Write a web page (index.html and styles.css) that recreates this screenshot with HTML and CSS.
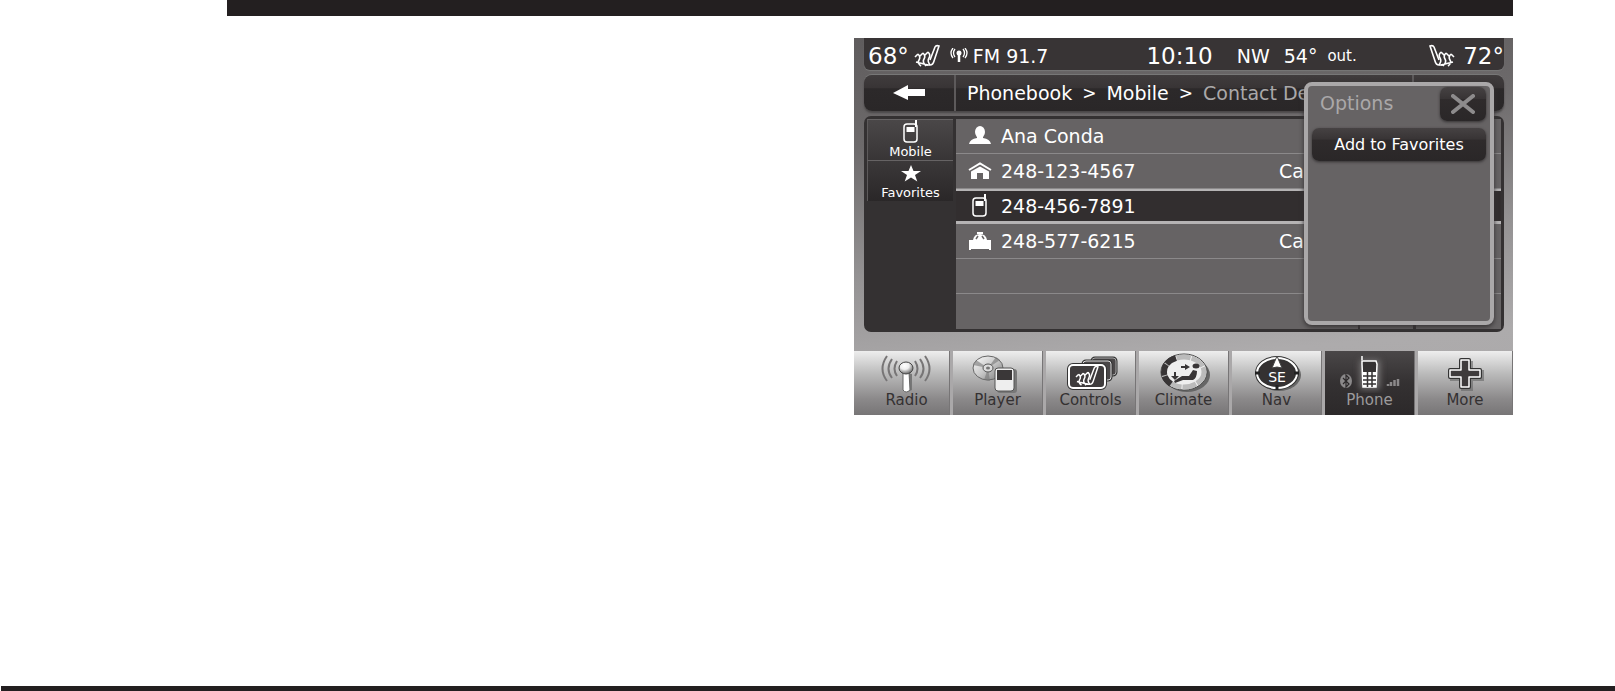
FILE: index.html
```
<!DOCTYPE html>
<html lang="en">
<head>
  <meta charset="UTF-8">
  <meta name="viewport" content="width=device-width, initial-scale=1.0">
  <title>Contact Details</title>
  <link rel="stylesheet" href="styles.css">
</head>
<body>
  <!-- shared icons -->
  <svg class="defs" aria-hidden="true">
    <defs>
      <symbol id="mobile" viewBox="0 0 18 24">
        <rect x="2" y="4" width="13" height="18" rx="3" fill="none" stroke="#fff" stroke-width="1.5"/>
        <path d="M14 0v7" stroke="#fff" stroke-width="2"/>
        <path d="M4.500 7h8v5h-8z" fill="#fff"/>
      </symbol>
      <symbol id="seat" viewBox="0 0 26 24">
        <path d="M16 16l5-13q1-2 4-1l-5 15q-1 4-4 4h-4" fill="none" stroke-width="1.600"/>
        <path d="M4 10q3 3 1 6t2 6M9 9q3 3 1 6t2 7M14 8q3 3 1 6t1 7M1 13l3-3M6 12l3-3M11 11l3-3M2 18l12 3" fill="none" stroke-width="1.600"/>
      </symbol>
      <linearGradient id="metal" x1="0" y1="0" x2="1" y2="1">
        <stop offset="0" stop-color="#fff"/>
        <stop offset=".5" stop-color="#c8c8c8"/>
        <stop offset="1" stop-color="#777"/>
      </linearGradient>
      <radialGradient id="ball" cx=".4" cy=".3" r=".8">
        <stop offset="0" stop-color="#fff"/>
        <stop offset=".4" stop-color="#eee"/>
        <stop offset="1" stop-color="#444"/>
      </radialGradient>
    </defs>
  </svg>

  <div class="topbar"></div>

  <main>
    <div class="screen">
      <header class="status">
        <span class="temp">68°</span>
        <svg class="seat" width="26" height="24"><use href="#seat"/></svg>
        <svg class="antenna" width="18" height="16" viewBox="0 0 18 16">
          <circle cx="9" cy="5" r="2.500" fill="#fff"/>
          <path d="M9 5v9" stroke="#fff" stroke-width="2.500"/>
          <path d="M5 1q-3 4 0 8M13 1q3 4 0 8M3 0q-4 5 0 10M15 0q4 5 0 10" fill="none" stroke="#fff" stroke-width="1.300"/>
        </svg>
        <span class="station">FM 91.7</span>
        <span class="clock">10:10</span>
        <span class="compass">NW</span>
        <span class="outside">54°</span>
        <span class="out">out.</span>
        <svg class="seat right" width="26" height="24"><use href="#seat" transform="translate(26 0) scale(-1 1)"/></svg>
        <span class="temp">72°</span>
      </header>

      <div class="crumbs">
        <button class="back" aria-label="Back">
          <svg width="32" height="16" viewBox="0 0 32 16"><path d="M0 8L15 0v4h17v7H15v4z" fill="#fff"/></svg>
        </button>
        <nav class="path">
          <a href="#">Phonebook</a><span>&gt;</span><a href="#">Mobile</a><span>&gt;</span><a href="#" class="current">Contact De</a>
        </nav>
        <div class="corner"></div>
      </div>

      <section class="book">
        <div class="side">
          <button>
            <svg width="18" height="24"><use href="#mobile"/></svg>
            <span>Mobile</span>
          </button>
          <button class="dark">
            <svg width="20" height="24" viewBox="0 0 20 24"><path d="M10 4l2.500 6H20l-6 4 2.300 6.500L10 16.500 3.700 20.500 6 14 0 10h7.500z" fill="#fff"/></svg>
            <span>Favorites</span>
          </button>
        </div>
        <ul class="contacts">
          <li>
            <svg width="24" height="24" viewBox="0 0 24 24"><ellipse cx="12" cy="8" rx="5" ry="6" fill="#fff"/><path d="M9 12h6v2q7 1 8 6H1q1-5 8-6z" fill="#fff"/></svg>
            <span>Ana Conda</span>
          </li>
          <li>
            <svg width="24" height="24" viewBox="0 0 24 24"><path d="M1 11L12 4.500 23 11" fill="none" stroke="#fff" stroke-width="2"/><path d="M3 12.500L12 7.500l9 5V20h-6v-6H9v6H3z" fill="#fff"/></svg>
            <span>248-123-4567</span>
            <button class="call">Ca</button>
          </li>
          <li class="selected">
            <svg width="24" height="24" viewBox="0 0 24 24"><use href="#mobile" x="3" width="18" height="24"/></svg>
            <span>248-456-7891</span>
          </li>
          <li>
            <svg width="24" height="24" viewBox="0 0 24 24"><path d="M1 11h22v10h-2v-1H3v1H1zM9 3h6v2H9z" fill="#fff"/><path d="M5 11q1-6 7-6t7 6z" fill="#fff"/><path d="M8 10l2-3M16 10l-2-3" stroke="#666364" stroke-width="1.500"/></svg>
            <span>248-577-6215</span>
            <button class="call">Ca</button>
          </li>
          <li></li>
          <li></li>
        </ul>
        <div class="ticks"></div>
      </section>

      <nav class="tabs">
        <button>
          <svg width="56" height="40" viewBox="0 0 56 40">
            <path d="M18 8q-5 8 0 15M13 6q-7 10 0 19M8 3q-9 13 0 25M36 8q5 8 0 15M41 6q7 10 0 19M46 3q9 13 0 25" fill="none" stroke="#777576" stroke-width="2"/>
            <path d="M29 20l4 1v16l-4 2z" fill="#777"/>
            <path d="M24 19h6l1 18q-4 4-7 0z" fill="#fff" stroke="#666"/>
            <ellipse cx="27" cy="15" rx="7" ry="6" fill="url(#ball)" stroke="#444"/>
          </svg>
          <span>Radio</span>
        </button>
        <button>
          <svg width="56" height="40" viewBox="0 0 56 40">
            <ellipse cx="18" cy="15" rx="15" ry="12" fill="url(#metal)" stroke="#666"/>
            <path d="M18 15L6 7l-3 5zM18 15l8-11 4 3zM18 15l-4 12 6 1z" fill="#777" opacity=".6"/>
            <ellipse cx="18" cy="15" rx="5" ry="4" fill="#ddd" stroke="#555"/>
            <ellipse cx="18" cy="15" rx="2" ry="1.500" fill="#777"/>
            <rect x="27" y="16" width="20" height="24" rx="3" fill="#777"/>
            <rect x="25" y="15" width="19" height="23" rx="3" fill="#eee" stroke="#555"/>
            <path d="M27 17h15v10H27z" fill="#3a3738"/>
          </svg>
          <span>Player</span>
        </button>
        <button>
          <svg width="56" height="40" viewBox="0 0 56 40">
            <rect x="29" y="5" width="24" height="17" rx="3" fill="#4a4748" stroke="#333" stroke-width="3"/>
            <rect x="29" y="5" width="24" height="17" rx="3" fill="#4a4748" stroke="#aaa"/>
            <rect x="20" y="8" width="28" height="19" rx="3" fill="#4a4748" stroke="#333" stroke-width="3"/>
            <rect x="20" y="8" width="28" height="19" rx="3" fill="#4a4748" stroke="#ddd"/>
            <rect x="6" y="12" width="36" height="23" rx="4" fill="#3e3b3c" stroke="#333" stroke-width="4"/>
            <rect x="6" y="12" width="36" height="23" rx="4" fill="#3e3b3c" stroke="#fff" stroke-width="2"/>
            <use href="#seat" class="seat" x="11" y="12" width="26" height="22"/>
          </svg>
          <span>Controls</span>
        </button>
        <button>
          <svg width="56" height="40" viewBox="0 0 56 40">
            <ellipse cx="31" cy="22" rx="23" ry="17" fill="#666"/>
            <ellipse cx="28" cy="19" rx="23" ry="18" fill="#eee" stroke="#444"/>
            <ellipse cx="28" cy="19" rx="20" ry="15" fill="none" stroke="#bbb" stroke-width="5" stroke-dasharray="14 1"/>
            <path d="M20 5q-12 4-12 14 0 7 7 12" fill="none" stroke="#383536" stroke-width="6" stroke-dasharray="11 1"/>
            <ellipse cx="40" cy="13" rx="3.500" ry="2.500" fill="#383536"/>
            <path d="M41 18q0 7-4 9H27l-8 3-1-2 8-5h7l4-6z" fill="#383536"/>
            <path d="M25 13h4v-2l5 3-5 3v-2h-4zM18 19h2v4h3l-4 4-4-4h3z" fill="#383536"/>
          </svg>
          <span>Climate</span>
        </button>
        <button>
          <svg width="56" height="40" viewBox="0 0 56 40">
            <ellipse cx="30" cy="22" rx="22" ry="16" fill="#666"/>
            <ellipse cx="28" cy="20" rx="20" ry="15" fill="#343132" stroke="#333" stroke-width="4"/>
            <ellipse cx="28" cy="20" rx="20" ry="15" fill="none" stroke="#fff" stroke-width="2"/>
            <path d="M6 20h5M45 20h5M28 32v5" stroke="#222" stroke-width="3"/>
            <path d="M28 3l-5 12q5-2 10 0z" fill="#fff" stroke="#444"/>
            <text x="28" y="29" text-anchor="middle">SE</text>
          </svg>
          <span>Nav</span>
        </button>
        <button class="active">
          <svg width="64" height="40" viewBox="0 0 64 40">
            <rect x="22" y="7" width="20" height="29" fill="#787576" class="glow"/>
            <ellipse cx="8" cy="28" rx="6" ry="7" fill="#8b898a"/>
            <path d="M5 25l6 6-3 3V22l3 3-6 6" fill="none" stroke="#2c292a" stroke-width="1.200"/>
            <path d="M24 3v4M24 8h14l1 3-1 23H25l-1-23z" fill="#353233" stroke="#fff" stroke-width="1.500"/>
            <path d="M25 19h13v15H25z" fill="#fff"/>
            <path d="M25 23h13M25 27h13M25 31h13M29.500 19v15M34 19v15" stroke="#353233" stroke-width="1.500"/>
            <path d="M50 33v-2M53 33v-4M56.500 33v-6M60 33v-7" stroke="#8b898a" stroke-width="2.500"/>
          </svg>
          <span>Phone</span>
        </button>
        <button>
          <svg width="56" height="40" viewBox="0 0 56 40">
            <path d="M26 10h8v9h11v7H34v10h-8V26H15v-7h11z" fill="#666" stroke="#666" stroke-width="4" opacity=".6"/>
            <path d="M24 7h8v10h11v7H32v10h-8V24H13v-7h11z" fill="#3e3b3c" stroke="#333" stroke-width="4" stroke-linejoin="round"/>
            <path d="M24 7h8v10h11v7H32v10h-8V24H13v-7h11z" fill="#3e3b3c" stroke="#fff" stroke-width="1.500" stroke-linejoin="round"/>
          </svg>
          <span>More</span>
        </button>
      </nav>

      <aside class="options">
        <div class="options-head">
          <h2>Options</h2>
          <button class="close" aria-label="Close">
            <svg width="24" height="20" viewBox="0 0 24 20"><path d="M2 2l20 16M22 2L2 18" stroke="#8d8b8c" stroke-width="4" stroke-linecap="round"/></svg>
          </button>
        </div>
        <button class="add">Add to Favorites</button>
      </aside>
    </div>
  </main>

  <footer></footer>
</body>
</html>
```

FILE: styles.css
```
* {
  margin: 0;
  padding: 0;
  box-sizing: border-box;
}

body {
  min-height: 100vh;
  display: flex;
  flex-direction: column;
  background: #fff;
  font-family: "DejaVu Sans", sans-serif;
  font-size: 19px;
  color: #fff;
}

button {
  border: 0;
  background: none;
  font: inherit;
  color: inherit;
  cursor: pointer;
}

a {
  color: inherit;
  text-decoration: none;
}

svg {
  display: block;
  flex: none;
}

.defs {
  position: absolute;
  width: 0;
  height: 0;
}

.topbar {
  height: 16px;
  margin: 0 102px 0 227px;
  background: #231f20;
}

main {
  flex: 1;
  display: grid;
  grid-template-columns: 627fr 659fr;
  align-items: start;
  padding: 22px 102px 22px 227px;
}

footer {
  height: 5px;
  margin-left: 1px;
  background: #231f20;
}

.screen {
  grid-column: 2;
  position: relative;
  overflow: hidden;
  background: linear-gradient(175deg, #5f5c5d 0%, #6d6a6b 25%, #949293 55%, #adabac 80%, #aaa8a9 100%);
}

/* status line */
.status {
  display: flex;
  align-items: center;
  height: 32px;
  margin: 0 9px 0 10px;
  padding: 4px 0 0 4px;
  border-radius: 0 0 6px 6px;
  background: #383435;
  box-shadow: 0 1px 1px #777;
  white-space: nowrap;
}

.temp, .clock {
  font-size: 23px;
}

.status .seat {
  margin-left: 5px;
}

.seat {
  stroke: #fff;
}

.status .right {
  margin-left: auto;
  margin-right: 8px;
}

.antenna {
  margin: 0 5px 0 10px;
}

.clock {
  margin-left: 98px;
}

.compass {
  margin-left: 24px;
}

.outside {
  margin-left: 14px;
}

.out {
  margin-left: 10px;
  font-size: 15px;
}

/* breadcrumb */
.crumbs {
  display: flex;
  height: 36px;
  margin: 5px 9px 5px 10px;
  border-radius: 8px;
  background: linear-gradient(#403c3d, #383435 36%, #2c292a 38%, #2a2728);
  box-shadow: 0 2px 2px #4a4748, 0 -1px 0 #777;
}

.back {
  width: 92px;
  display: flex;
  align-items: center;
  justify-content: center;
  border-right: 2px solid #5d5a5b;
}

.path {
  flex: 1;
  display: flex;
  align-items: center;
  gap: 10px;
  padding-left: 11px;
  white-space: nowrap;
}

.path .current {
  color: #aaa8a9;
}

.path span {
  font-size: 17px;
}

.corner {
  width: 92px;
  border-left: 2px solid #5d5a5b;
}

/* phonebook */
.book {
  position: relative;
  display: flex;
  margin: 0 9px 0 10px;
  border: 3px solid #343132;
  border-radius: 7px;
  background: #343132;
}

.side {
  width: 86px;
}

.side button {
  width: 86px;
  height: 41px;
  display: flex;
  flex-direction: column;
  align-items: center;
  border-top: 1px solid #666364;
  border-left: 1px solid #5d5a5b;
  background: linear-gradient(#4a4748, #383536);
}

.side button.dark {
  background: linear-gradient(#3b3839, #2a2728);
}

.side span {
  height: 12px;
  line-height: 16px;
  font-size: 13px;
  overflow: hidden;
}

.contacts {
  flex: 1;
  margin-left: 3px;
  list-style: none;
  background: #666364;
}

.contacts li {
  display: flex;
  align-items: center;
  height: 35px;
  padding-left: 12px;
  gap: 9px;
  border-bottom: 1px solid #8b898a;
}

.contacts li:last-child {
  border-bottom: 0;
}

.contacts .selected {
  background: #322e2f;
  border-top: 2px solid #b5b3b4;
  border-bottom: 3px solid #b5b3b4;
}

.call {
  margin-left: auto;
  margin-right: 197px;
}

.ticks {
  position: absolute;
  right: 85px;
  bottom: 0;
  width: 58px;
  height: 6px;
  border-left: 2px solid #343132;
  border-right: 3px solid #343132;
}

/* bottom tabs */
.tabs {
  display: grid;
  grid-template-columns: 96fr repeat(5, 93fr) 98fr;
  margin-top: 19px;
}

.tabs button {
  height: 64px;
  display: flex;
  flex-direction: column;
  align-items: center;
  padding-top: 2px;
  border-left: 3px solid #aaa8a9;
  border-right: 1px solid #777576;
  background: linear-gradient(#eee, #bbb 35%, #8b898a 75%, #777576);
  color: #343132;
  font-size: 15px;
  line-height: 14px;
}

.tabs button:first-child {
  border-left: 0;
  padding-left: 10px;
}

.tabs .active {
  background: linear-gradient(#4a4748, #343132 50%, #2c292a);
  color: #9c9a9b;
}

.tabs text {
  font-size: 14px;
  fill: #fff;
}

.glow {
  filter: blur(3px);
}

/* options popup over the list */
.options {
  position: absolute;
  top: 44px;
  right: 19px;
  width: 190px;
  height: 243px;
  padding: 1px 4px;
  border: 4px solid #aaa8a9;
  border-radius: 8px;
  background: #666364;
  box-shadow: 0 2px 5px #343132;
}

.options-head {
  display: flex;
  justify-content: space-between;
  padding-left: 8px;
}

.options h2 {
  font-size: 19px;
  font-weight: normal;
  line-height: 32px;
  color: #aaa8a9;
}

.close {
  width: 46px;
  height: 34px;
  display: flex;
  align-items: center;
  justify-content: center;
}

.close, .add {
  border-radius: 7px;
  background: linear-gradient(#464243, #383435 34%, #2f2b2c 36%, #2a2728);
  box-shadow: 0 1px 3px #343132;
}

.add {
  width: 100%;
  height: 33px;
  margin-top: 7px;
  font-size: 16px;
}
```
